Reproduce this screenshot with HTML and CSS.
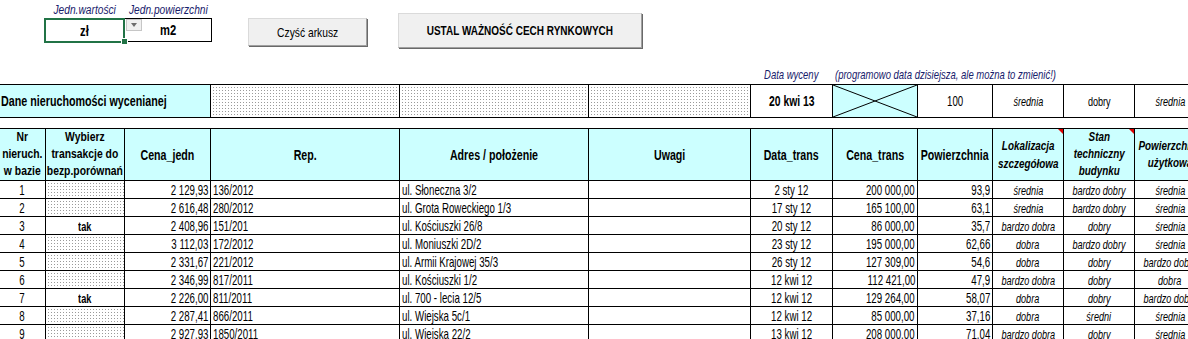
FILE: index.html
```html
<!DOCTYPE html>
<html lang="pl">
<head>
    <meta charset="UTF-8">
    <title>Arkusz wyceny</title>
    <link rel="stylesheet" href="styles.css">
</head>
<body>
<div class="sheet">
    <div class="top">
        <div class="units">
            <div class="unit-labels">
                <div><span>Jedn.wartości</span></div>
                <div><span>Jedn.powierzchni</span></div>
            </div>
            <div class="unit-inputs">
                <div class="sel"><span>zł</span></div>
                <div class="m2">
                    <div class="dd"></div>
                    <span>m2</span>
                </div>
            </div>
        </div>
        <button class="btn btn-clear"><span>Czyść arkusz</span></button>
        <button class="btn btn-main"><span>USTAL WAŻNOŚĆ CECH RYNKOWYCH</span></button>
    </div>

    <div class="note">
        <div class="dw"><span>Data wyceny</span></div>
        <div class="hint"><span>(programowo data dzisiejsza, ale można to zmienić!)</span></div>
    </div>

    <div class="tbl dane">
        <div class="c cyan title"><span>Dane nieruchomości wycenianej</span></div>
        <div class="c dot"></div>
        <div class="c dot"></div>
        <div class="c dot"></div>
        <div class="c"><span class="b">20 kwi 13</span></div>
        <div class="c cyan cross">
            <svg viewBox="0 0 84 32" preserveAspectRatio="none"><line x1="0" y1="0" x2="84" y2="32"/><line x1="0" y1="32" x2="84" y2="0"/></svg>
        </div>
        <div class="c"><span>100</span></div>
        <div class="c"><span class="i">średnia</span></div>
        <div class="c"><span class="s">dobry</span></div>
        <div class="c"><span class="i">średnia</span></div>
    </div>

    <div class="tbl data">
        <div class="tr head">
            <div class="c"><span>Nr<br>nieruch.<br>w bazie</span></div>
            <div class="c"><span>Wybierz<br>transakcje do<br>bezp.porównań</span></div>
            <div class="c"><span>Cena_jedn</span></div>
            <div class="c"><span>Rep.</span></div>
            <div class="c"><span>Adres / położenie</span></div>
            <div class="c"><span>Uwagi</span></div>
            <div class="c"><span>Data_trans</span></div>
            <div class="c"><span>Cena_trans</span></div>
            <div class="c"><span>Powierzchnia</span></div>
            <div class="c cm"><span>Lokalizacja<br>szczegółowa</span></div>
            <div class="c cm"><span>Stan<br>techniczny<br>budynku</span></div>
            <div class="c"><span>Powierzchnia<br>użytkowa</span></div>
        </div>
        <div class="tr">
            <div class="c"><span>1</span></div><div class="c dot"></div>
            <div class="c"><span>2 129,93</span></div><div class="c"><span>136/2012</span></div>
            <div class="c"><span>ul. Słoneczna 3/2</span></div><div class="c"></div>
            <div class="c"><span>2 sty 12</span></div><div class="c"><span>200 000,00</span></div>
            <div class="c"><span>93,9</span></div><div class="c"><span>średnia</span></div>
            <div class="c"><span>bardzo dobry</span></div><div class="c"><span>średnia</span></div>
        </div>
        <div class="tr">
            <div class="c"><span>2</span></div><div class="c dot"></div>
            <div class="c"><span>2 616,48</span></div><div class="c"><span>280/2012</span></div>
            <div class="c"><span>ul. Grota Roweckiego 1/3</span></div><div class="c"></div>
            <div class="c"><span>17 sty 12</span></div><div class="c"><span>165 100,00</span></div>
            <div class="c"><span>63,1</span></div><div class="c"><span>średnia</span></div>
            <div class="c"><span>bardzo dobry</span></div><div class="c"><span>średnia</span></div>
        </div>
        <div class="tr">
            <div class="c"><span>3</span></div><div class="c"><span>tak</span></div>
            <div class="c"><span>2 408,96</span></div><div class="c"><span>151/201</span></div>
            <div class="c"><span>ul. Kościuszki 26/8</span></div><div class="c"></div>
            <div class="c"><span>20 sty 12</span></div><div class="c"><span>86 000,00</span></div>
            <div class="c"><span>35,7</span></div><div class="c"><span>bardzo dobra</span></div>
            <div class="c"><span>dobry</span></div><div class="c"><span>średnia</span></div>
        </div>
        <div class="tr">
            <div class="c"><span>4</span></div><div class="c dot"></div>
            <div class="c"><span>3 112,03</span></div><div class="c"><span>172/2012</span></div>
            <div class="c"><span>ul. Moniuszki 2D/2</span></div><div class="c"></div>
            <div class="c"><span>23 sty 12</span></div><div class="c"><span>195 000,00</span></div>
            <div class="c"><span>62,66</span></div><div class="c"><span>dobra</span></div>
            <div class="c"><span>bardzo dobry</span></div><div class="c"><span>średnia</span></div>
        </div>
        <div class="tr">
            <div class="c"><span>5</span></div><div class="c dot"></div>
            <div class="c"><span>2 331,67</span></div><div class="c"><span>221/2012</span></div>
            <div class="c"><span>ul. Armii Krajowej 35/3</span></div><div class="c"></div>
            <div class="c"><span>26 sty 12</span></div><div class="c"><span>127 309,00</span></div>
            <div class="c"><span>54,6</span></div><div class="c"><span>dobra</span></div>
            <div class="c"><span>dobry</span></div><div class="c"><span>bardzo dobra</span></div>
        </div>
        <div class="tr">
            <div class="c"><span>6</span></div><div class="c dot"></div>
            <div class="c"><span>2 346,99</span></div><div class="c"><span>817/2011</span></div>
            <div class="c"><span>ul. Kościuszki 1/2</span></div><div class="c"></div>
            <div class="c"><span>12 kwi 12</span></div><div class="c"><span>112 421,00</span></div>
            <div class="c"><span>47,9</span></div><div class="c"><span>bardzo dobra</span></div>
            <div class="c"><span>dobry</span></div><div class="c"><span>dobra</span></div>
        </div>
        <div class="tr">
            <div class="c"><span>7</span></div><div class="c"><span>tak</span></div>
            <div class="c"><span>2 226,00</span></div><div class="c"><span>811/2011</span></div>
            <div class="c"><span>ul. 700 - lecia 12/5</span></div><div class="c"></div>
            <div class="c"><span>12 kwi 12</span></div><div class="c"><span>129 264,00</span></div>
            <div class="c"><span>58,07</span></div><div class="c"><span>dobra</span></div>
            <div class="c"><span>dobry</span></div><div class="c"><span>bardzo dobra</span></div>
        </div>
        <div class="tr">
            <div class="c"><span>8</span></div><div class="c dot"></div>
            <div class="c"><span>2 287,41</span></div><div class="c"><span>866/2011</span></div>
            <div class="c"><span>ul. Wiejska 5c/1</span></div><div class="c"></div>
            <div class="c"><span>12 kwi 12</span></div><div class="c"><span>85 000,00</span></div>
            <div class="c"><span>37,16</span></div><div class="c"><span>dobra</span></div>
            <div class="c"><span>średni</span></div><div class="c"><span>średnia</span></div>
        </div>
        <div class="tr">
            <div class="c"><span>9</span></div><div class="c dot"></div>
            <div class="c"><span>2 927,93</span></div><div class="c"><span>1850/2011</span></div>
            <div class="c"><span>ul. Wiejska 22/2</span></div><div class="c"></div>
            <div class="c"><span>13 kwi 12</span></div><div class="c"><span>208 000,00</span></div>
            <div class="c"><span>71,04</span></div><div class="c"><span>bardzo dobra</span></div>
            <div class="c"><span>dobry</span></div><div class="c"><span>średnia</span></div>
        </div>
    </div>
</div>
</body>
</html>
```

FILE: styles.css
```css
* {
    box-sizing: border-box;
}
body {
    margin: 0;
    background: #fff;
    color: #000;
    font-family: "Liberation Sans", Arial, sans-serif;
    overflow: hidden;
}
.sheet {
    --cols: 45px 78px 85px 188px 188px 161px 81px 84px 74px 70px 70px 70px;
    width: 1188px;
    height: 339px;
    overflow: hidden;
}

/* top controls */
.top {
    display: flex;
    align-items: flex-start;
    height: 58px;
}
.units {
    margin-left: 44px;
}
.unit-labels {
    display: flex;
    height: 18px;
}
.unit-labels div {
    display: flex;
    align-items: center;
    justify-content: center;
    padding-top: 2px;
    color: #17206b;
    font-size: 12px;
    font-style: italic;
    white-space: nowrap;
}
.unit-labels div:first-child {
    width: 81px;
}
.unit-labels div:last-child {
    width: 87px;
}
.unit-labels span {
    transform: scaleX(.85);
}
.unit-inputs {
    display: flex;
}
.sel {
    position: relative;
    z-index: 1;
    width: 81px;
    height: 25px;
    border: 2px solid #217346;
    display: flex;
    align-items: center;
    justify-content: center;
    font-size: 14px;
    font-weight: bold;
}
.sel::after {
    content: "";
    position: absolute;
    right: -4px;
    bottom: -3px;
    width: 5px;
    height: 5px;
    background: #217346;
    box-shadow: 0 0 0 1px #fff;
}
.m2 {
    position: relative;
    width: 87px;
    height: 24px;
    border: 1px solid #000;
    border-left: none;
    display: flex;
    align-items: center;
    justify-content: center;
    font-size: 14px;
    font-weight: bold;
}
.dd {
    position: absolute;
    left: 1px;
    top: 0;
    width: 16px;
    height: 12px;
    background: #f0f0f0;
    border: 1px solid #c6c6c6;
}
.dd::after {
    content: "";
    position: absolute;
    left: 4px;
    top: 3px;
    border-left: 3.5px solid transparent;
    border-right: 3.5px solid transparent;
    border-top: 4px solid #6d6d6d;
}
.sel span,
.m2 span {
    transform: scaleX(.8);
}
.btn {
    display: flex;
    align-items: center;
    justify-content: center;
    padding: 0;
    background: #f0f0f0;
    border: 1px solid #dadada;
    border-right-color: #a0a0a0;
    border-bottom-color: #a0a0a0;
    box-shadow: 1px 1px 0 #696969;
    font-family: inherit;
    color: #000;
    white-space: nowrap;
}
.btn-clear {
    margin-left: 36px;
    margin-top: 18px;
    width: 119px;
    height: 28px;
    font-size: 13px;
}
.btn-clear span {
    transform: scaleX(.79);
}
.btn-main {
    margin-left: 31px;
    margin-top: 13px;
    width: 244px;
    height: 35px;
    font-size: 13.5px;
    font-weight: bold;
}
.btn-main span {
    transform: scaleX(.74);
}

/* note above the table */
.note {
    display: grid;
    grid-template-columns: var(--cols);
    column-gap: 1px;
    height: 26px;
    align-items: end;
    color: #17206b;
    font-size: 13px;
    font-style: italic;
    line-height: 18px;
}
.note div {
    display: flex;
    white-space: nowrap;
}
.note span {
    transform: scaleX(.73);
}
.dw {
    grid-column: 7;
    justify-content: center;
}
.hint {
    grid-column: 8 / span 5;
    padding-left: 2px;
}
.hint span {
    transform-origin: left center;
}

/* sheet grid */
.tbl {
    display: grid;
    grid-template-columns: var(--cols);
    gap: 1px;
    padding: 1px 0;
    width: max-content;
    background: #000;
}
.tr {
    display: contents;
}
.c {
    position: relative;
    display: flex;
    align-items: center;
    justify-content: center;
    overflow: hidden;
    background: #fff;
}
.c span {
    display: block;
    white-space: nowrap;
    text-align: center;
    font-size: 14.5px;
    transform: scaleX(.67);
}
.cyan {
    background: #ccffff;
}
.dot {
    background-color: #fff;
    background-image: linear-gradient(90deg, #fff 2px, transparent 2px), linear-gradient(#fff 2px, #9a9a9a 2px);
    background-size: 3px 3px;
}

.dane {
    grid-template-rows: 32px;
}
.dane .title {
    grid-column: span 3;
    justify-content: flex-start;
    padding-left: 1px;
}
.dane .title span {
    font-weight: bold;
    transform: scaleX(.74);
    transform-origin: left center;
}
.dane .b {
    font-size: 14px;
    font-weight: bold;
    transform: scaleX(.74);
}
.dane .i {
    font-size: 13px;
    font-style: italic;
    transform: scaleX(.7);
}
.dane .s {
    font-size: 13px;
    transform: scaleX(.7);
}
.cross svg {
    width: 100%;
    height: 100%;
}
.cross line {
    stroke: #000;
    stroke-width: 1;
    vector-effect: non-scaling-stroke;
}

.data {
    margin-top: 10px;
    grid-template-rows: 51px;
    grid-auto-rows: 17px;
}
.head .c {
    background: #ccffff;
}
.head .c span {
    font-size: 14px;
    font-weight: bold;
    transform: scaleX(.76);
}
.head .c:nth-child(-n+2) span {
    font-size: 12.5px;
    line-height: 17px;
    transform: scaleX(.83);
}
.head .c:nth-child(n+10) span {
    font-size: 12.5px;
    font-style: italic;
    line-height: 17px;
    transform: scaleX(.79);
}
.head .c:nth-child(10) span {
    line-height: 18px;
}
.cm::after {
    content: "";
    position: absolute;
    top: 0;
    right: 0;
    border-left: 5px solid transparent;
    border-top: 5px solid #e00000;
}

.tr:not(.head) .c {
    align-items: flex-end;
}
.tr:not(.head) .c span {
    line-height: 15px;
}
.tr:not(.head) .c:nth-child(2) span {
    font-size: 13.5px;
    font-weight: bold;
    transform: scaleX(.68);
}
.tr:not(.head) .c:nth-child(3),
.tr:not(.head) .c:nth-child(8),
.tr:not(.head) .c:nth-child(9) {
    justify-content: flex-end;
    padding-right: 2px;
}
.tr:not(.head) .c:nth-child(3) span,
.tr:not(.head) .c:nth-child(8) span,
.tr:not(.head) .c:nth-child(9) span {
    transform-origin: right center;
}
.tr:not(.head) .c:nth-child(4),
.tr:not(.head) .c:nth-child(5) {
    justify-content: flex-start;
    padding-left: 2px;
}
.tr:not(.head) .c:nth-child(4) span,
.tr:not(.head) .c:nth-child(5) span {
    transform-origin: left center;
}
.tr:not(.head) .c:nth-child(n+10) span {
    font-size: 13px;
    font-style: italic;
    transform: scaleX(.7);
}
```
